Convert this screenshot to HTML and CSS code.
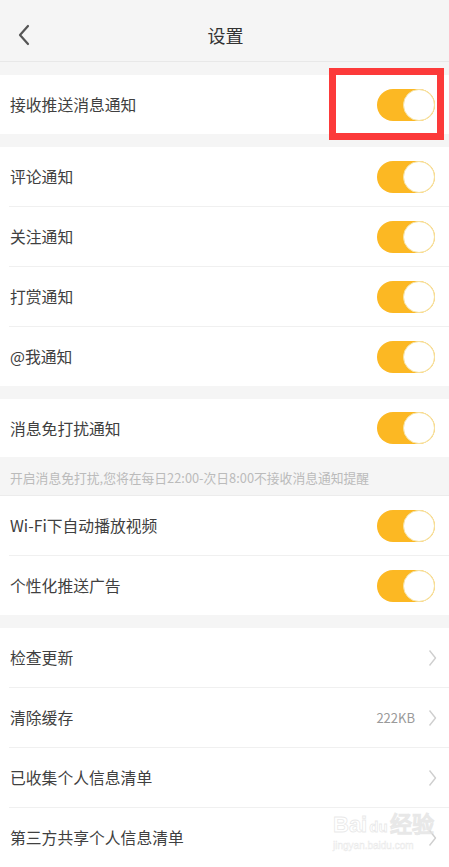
FILE: index.html
```html
<!DOCTYPE html>
<html lang="zh-CN">
  <head>
    <meta charset="UTF-8" />
    <meta name="viewport" content="width=device-width, initial-scale=1.0" />
    <title>设置</title>
    <link rel="stylesheet" href="styles.css">
  </head>
  <body>
    <div class="page">
      <header class="nav">
        <span class="back">
          <svg width="14" height="22" viewBox="0 0 14 22"><path d="M11 2 L3 11 L11 20" fill="none" stroke="#555" stroke-width="2.2" stroke-linecap="round" stroke-linejoin="round"/></svg>
        </span>
        <h1>设置</h1>
      </header>

      <section class="group">
        <div class="row">
          <span class="label">接收推送消息通知</span>
          <span class="switch highlight"><span class="knob"></span></span>
        </div>
      </section>

      <section class="group">
        <div class="row">
          <span class="label">评论通知</span>
          <span class="switch"><span class="knob"></span></span>
        </div>
        <div class="row">
          <span class="label">关注通知</span>
          <span class="switch"><span class="knob"></span></span>
        </div>
        <div class="row">
          <span class="label">打赏通知</span>
          <span class="switch"><span class="knob"></span></span>
        </div>
        <div class="row">
          <span class="label">@我通知</span>
          <span class="switch"><span class="knob"></span></span>
        </div>
      </section>

      <section class="group">
        <div class="row short">
          <span class="label">消息免打扰通知</span>
          <span class="switch"><span class="knob"></span></span>
        </div>
      </section>
      <p class="note">开启消息免打扰,您将在每日22:00-次日8:00不接收消息通知提醒</p>

      <section class="group flush">
        <div class="row">
          <span class="label">Wi-Fi下自动播放视频</span>
          <span class="switch"><span class="knob"></span></span>
        </div>
        <div class="row">
          <span class="label">个性化推送广告</span>
          <span class="switch"><span class="knob"></span></span>
        </div>
      </section>

      <section class="group">
        <div class="row">
          <span class="label">检查更新</span>
          <svg class="arrow" width="9" height="18" viewBox="0 0 9 18"><path d="M1.5 1.5 L7.5 9 L1.5 16.5" fill="none" stroke="#cfcfcf" stroke-width="1.4" stroke-linejoin="round"/></svg>
        </div>
        <div class="row">
          <span class="label">清除缓存</span>
          <span class="value">222KB</span>
          <svg class="arrow" width="9" height="18" viewBox="0 0 9 18"><path d="M1.5 1.5 L7.5 9 L1.5 16.5" fill="none" stroke="#cfcfcf" stroke-width="1.4" stroke-linejoin="round"/></svg>
        </div>
        <div class="row">
          <span class="label">已收集个人信息清单</span>
          <svg class="arrow" width="9" height="18" viewBox="0 0 9 18"><path d="M1.5 1.5 L7.5 9 L1.5 16.5" fill="none" stroke="#cfcfcf" stroke-width="1.4" stroke-linejoin="round"/></svg>
        </div>
        <div class="row">
          <span class="label">第三方共享个人信息清单</span>
          <svg class="arrow" width="9" height="18" viewBox="0 0 9 18"><path d="M1.5 1.5 L7.5 9 L1.5 16.5" fill="none" stroke="#cfcfcf" stroke-width="1.4" stroke-linejoin="round"/></svg>
        </div>
      </section>

      <div class="watermark">
        <span class="wm-logo">Bai<span class="wm-du">du</span>经验</span>
        <span class="wm-url">jingyan.baidu.com</span>
      </div>
    </div>
  </body>
</html>
```

FILE: styles.css
```css
body {
  margin: 0;
  font-family: "Noto Sans CJK SC", "Noto Sans", sans-serif;
  background-color: #f5f5f5;
  color: #444;
}

.page {
  position: relative;
  height: 867px;
  overflow: hidden;
}

.nav {
  height: 61px;
  border-bottom: 1px solid #e8e8e8;
  background-color: #f5f5f5;
  display: flex;
  align-items: center;
  justify-content: center;
  position: relative;
}

.back {
  position: absolute;
  left: 17px;
  top: 24px;
  display: flex;
}

.nav h1 {
  margin: 0;
  font-size: 18px;
  font-weight: normal;
  color: #333;
  padding-top: 8px;
  padding-left: 2px;
}

.group {
  margin-top: 13px;
  background-color: #fff;
}

.group.flush {
  margin-top: 0;
}

.row {
  height: 59px;
  display: flex;
  align-items: center;
  padding: 0 14px 0 10px;
  position: relative;
}

.row.short {
  height: 58px;
}

.row + .row::before {
  content: "";
  position: absolute;
  left: 9px;
  right: 0;
  top: -1px;
  height: 1px;
  background-color: #f0f0f0;
}

.row + .row {
  margin-top: 1px;
}

.label {
  flex: 1;
  font-size: 15.8px;
  color: #404040;
}

.switch {
  width: 58px;
  height: 32px;
  border-radius: 16px;
  background-color: #fcb823;
  display: flex;
  justify-content: flex-end;
  position: relative;
}

.knob {
  width: 30px;
  height: 30px;
  border-radius: 50%;
  background-color: #fff;
  border: 1px solid #f5e2a3;
}

.switch.highlight::after {
  content: "";
  position: absolute;
  left: -48px;
  top: -21px;
  width: 101px;
  height: 58px;
  border: 7px solid #fc3a3a;
}

.value {
  font-size: 13px;
  color: #9a9a9a;
  margin-right: 13px;
}

.arrow {
  margin-right: -2px;
}

.note {
  margin: 0;
  height: 38px;
  line-height: 41px;
  padding-left: 10px;
  font-size: 12.8px;
  color: #bbb;
  border-bottom: 1px solid #ececec;
}

.watermark {
  position: absolute;
  left: 333px;
  top: 812px;
  display: flex;
  flex-direction: column;
  pointer-events: none;
}

.wm-logo {
  font-family: "Liberation Sans", sans-serif;
  font-size: 22px;
  font-weight: bold;
  line-height: 26px;
  color: rgba(255, 255, 255, 0.6);
  -webkit-text-stroke: 0.8px rgba(210, 210, 210, 0.5);
}

.wm-du {
  font-size: 15px;
  margin: 0 2px;
}

.wm-url {
  font-family: "Liberation Sans", sans-serif;
  font-size: 10px;
  color: rgba(255, 255, 255, 0.6);
  -webkit-text-stroke: 0.5px rgba(210, 210, 210, 0.5);
}
```
